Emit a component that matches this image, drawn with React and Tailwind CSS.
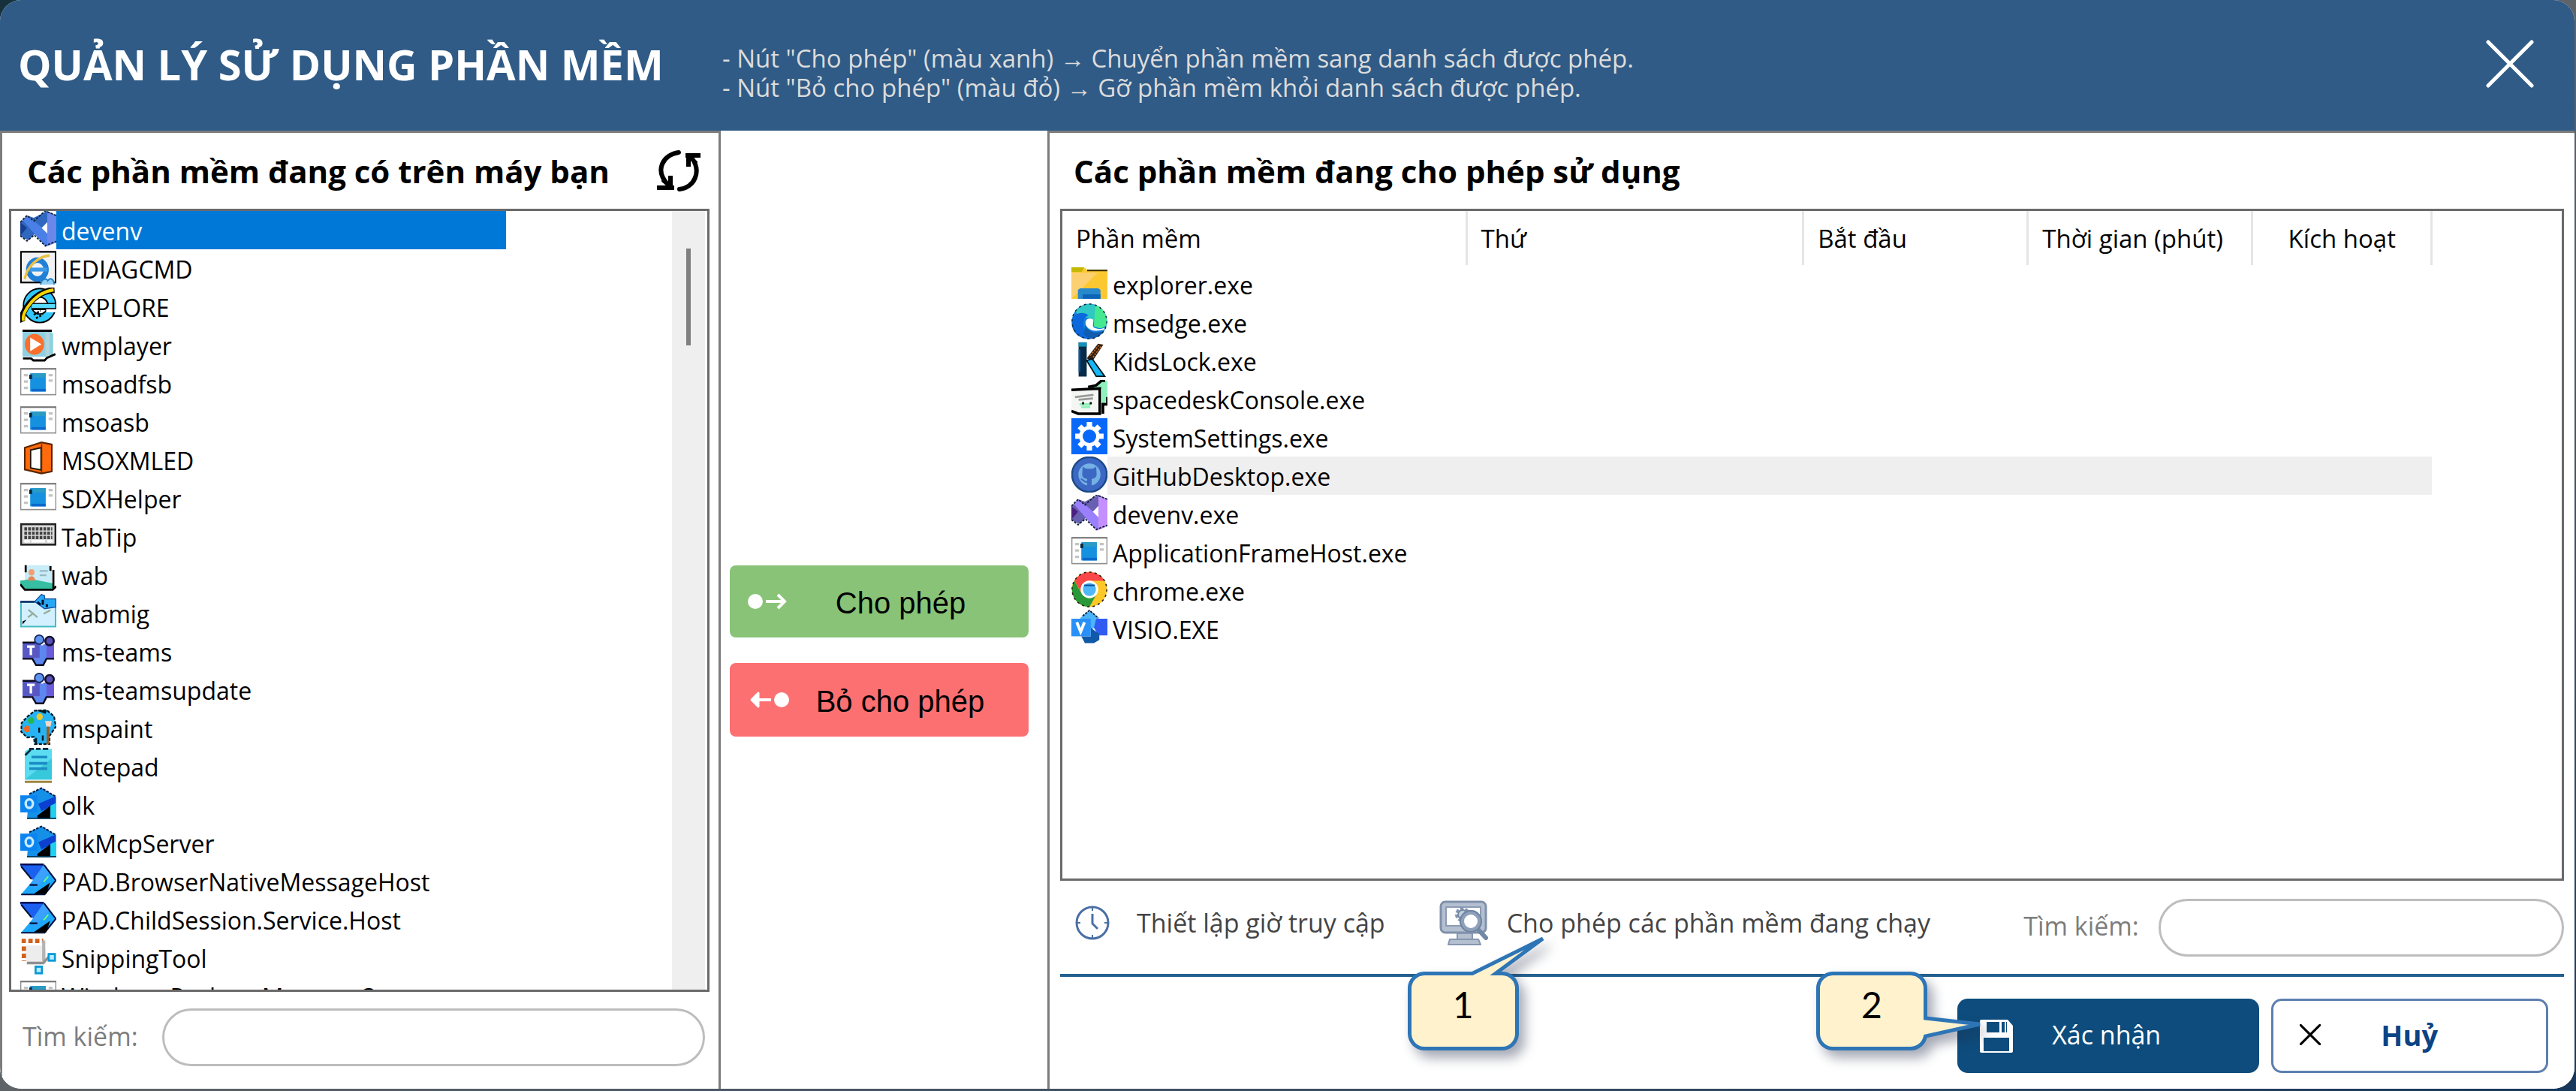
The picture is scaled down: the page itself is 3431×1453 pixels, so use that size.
import React, { useState } from "react";

/* ---------- 16-unit application icons ---------- */

function Glyph({ children, fit }) {
  return (
    <svg viewBox="0 0 16 16" className="h-12 w-12 shrink-0" aria-hidden="true">
      <g transform={fit}>{children}</g>
    </svg>
  );
}

function VisualStudioIcon({ left, dark, band, right }) {
  return (
    <Glyph>
      <path d="M0 5 3 2 6 3 12 0 16 2V13L12 15.5 6 10 3.5 13 0 11Z" fill={dark} />
      <path d="M0 5 3 7.5 0 11Z" fill={left} />
      <path d="M11 0 16 2V14L11 16Z" fill={right} />
      <path d="M3 7.5 12 0V5L4 12.5 1 12Z" fill={dark} />
      <path d="M1 4 3.5 2.2 12 9.5V15.5L10.5 15Z" fill={band} />
      <path d="M12 5 9.5 7.5 12 10Z" fill="#fff" />
      <path
        d="M0 5 3 2 6 4.5 11 0 16 2M0 11 3 13.3 6.2 10.7 11 15.4 16 13.5"
        fill="none"
        stroke="#102038"
        strokeWidth=".6"
        strokeDasharray="1 .6"
      />
    </Glyph>
  );
}

const VsBlueIcon = () => <VisualStudioIcon left="#173f8f" dark="#3068c0" band="#4a7fe8" right="#6a88ea" />;
const VsPurpleIcon = () => <VisualStudioIcon left="#4a2080" dark="#6860b0" band="#9a80ff" right="#c490ff" />;

function IeDiagIcon() {
  return (
    <Glyph fit="translate(0 .8) scale(1 1.08)">
      <rect x=".3" y=".3" width="15.4" height="12.6" fill="#f2f2f4" stroke="#000" strokeWidth=".7" />
      <circle cx="7.6" cy="7.6" r="3.9" fill="none" stroke="#2080d8" strokeWidth="2.3" />
      <path d="M4 7.6h8" stroke="#3c9ae8" strokeWidth="1.6" />
      <path d="M2 11.5C3 6 8 2.2 13 1.8" fill="none" stroke="#ecc040" strokeWidth="1.1" />
      <path d="M9 13.8c.5-2.4 2.6-3 3.2-1.6 1.2-1.6 2.8-.6 2.8 1.6" fill="#8fd0f4" stroke="#2080c0" strokeWidth=".6" />
    </Glyph>
  );
}

function IeIcon() {
  return (
    <Glyph fit="scale(1 1.05)">
      <circle cx="8.6" cy="7.6" r="5.4" fill="none" stroke="#000" strokeWidth="4.2" />
      <circle cx="8.6" cy="7.6" r="5.4" fill="none" stroke="#30c8fa" strokeWidth="3" />
      <path d="M5 8h10.5" stroke="#000" strokeWidth="3" />
      <path d="M5 7.8h10.5" stroke="#58dcff" strokeWidth="1.7" />
      <path d="M11.5 9.8h4.5" stroke="#fff" strokeWidth="1.3" />
      <path d="M1 14.5C-.5 11 6 1.5 15.2 1" fill="none" stroke="#000" strokeWidth="2.6" />
      <path d="M1.4 14C.2 10.6 6.5 2 14.8 1" fill="none" stroke="#f4d400" strokeWidth="1.3" />
      <path d="M6 11.5 9 9.8M7 13l3-1.6" stroke="#000" strokeWidth=".8" strokeDasharray="1 .6" />
    </Glyph>
  );
}

function MediaPlayerIcon() {
  return (
    <Glyph fit="translate(0 .2) scale(1 1.08)">
      <path d="M1 2h12l1.6 1v9.5H1Z" fill="#8ed0e0" />
      <path d="M1 1.8h13M1.2 13.2h3.6l1 .8h5l1-1 3.8-1.6" fill="none" stroke="#000" strokeWidth=".9" />
      <path d="M11.2 2.6h1.8v9.6h-1.8z" fill="#b2d4dc" />
      <circle cx="6.3" cy="7.4" r="4.3" fill="#fb6f2c" />
      <path d="M4.4 4.6 9.4 7.4 4.4 10.2Z" fill="#fff" />
    </Glyph>
  );
}

function GenericAppIcon() {
  return (
    <Glyph fit="translate(0 .8) scale(1 1.08)">
      <rect x=".2" y="1.2" width="15.6" height="10.6" fill="#fff" stroke="#8d8d8d" strokeWidth=".5" />
      <path d="M0 1.2h16" stroke="#777" strokeWidth=".6" />
      <path d="M1.6 3.8h1.8M1.6 6.4h1.8M1.6 9h1.8M12.6 3.8h1.8M12.6 6h1.8" stroke="#c4c4c4" strokeWidth="1" />
      <rect x="4.4" y="3" width="6.9" height="7.5" fill="#1691e0" />
      <path d="M5.5 3h5.8v1.8H5.5z" fill="#2a9bc4" />
      <path d="M5 9.4h6.3v1.1H5z" fill="#0c68cc" />
      <rect x="4" y="3.6" width="1.2" height="1.8" fill="#0a2438" />
    </Glyph>
  );
}

function OfficeIcon() {
  return (
    <Glyph fit="translate(0 .4) scale(1 1.03)">
      <path d="M2 2.6 9.4.3 14 1.2v11.6L9.4 13.7 2 12Z" fill="#ff6a0c" stroke="#5a2600" strokeWidth=".7" />
      <path d="M4.6 3.6 9.2 2.6v9.6l-4.6-.9Z" fill="#fff" stroke="#1c1400" strokeWidth=".6" />
      <path d="M9.5 1v12.4" stroke="#5c3000" strokeWidth=".5" />
    </Glyph>
  );
}

function KeyboardIcon() {
  return (
    <Glyph fit="translate(0 -.2) scale(1 1.08)">
      <rect x=".4" y="3" width="15.2" height="8.4" fill="#d8d8d8" stroke="#222" strokeWidth=".8" />
      <path
        d="M1.8 4.9h12.4M1.8 6.7h12.4M1.8 8.5h12.4"
        stroke="#444"
        strokeWidth="1.3"
        strokeDasharray="1.2 .5"
      />
      <path d="M1.8 10h2.4M5 10h6M12 10h2.4" stroke="#fff" strokeWidth="1" />
    </Glyph>
  );
}

function ContactsIcon() {
  return (
    <Glyph fit="translate(0 1) scale(1 1.07)">
      <path d="M2 3h12v8.6H2Z" fill="#c8ecf8" />
      <path d="M0 9.4 5 8.8 14.6 10.6V13H2L0 11.4Z" fill="#35bfa0" />
      <circle cx="5" cy="6" r="1.3" fill="#f0a070" />
      <path d="M3.4 9.4c0-2.4 3.2-2.4 3.2 0Z" fill="#e08858" />
      <path d="M8.6 5.4h3.6M8.6 7.2h3" stroke="#98b8c4" strokeWidth=".7" />
      <path d="M2.4 3v3M13.4 3.4v2M14.7 5v7.6M0 11l2 2.2h12.4l1.6-1.4" fill="none" stroke="#000" strokeWidth=".9" />
    </Glyph>
  );
}

function ContactsMigrateIcon() {
  return (
    <Glyph>
      <path d="M.3 3.6h15.4v10.9H.3Z" fill="#d2f0ff" stroke="#44bcc4" strokeWidth=".7" />
      <path d="M0 3.5h6.4" stroke="#04205c" strokeWidth=".8" />
      <path d="M6.4 3.4 9.4.2l1.4.6v1.4h5v3.6L10.8 6.6Z" fill="#28a8f4" stroke="#0c4c9c" strokeWidth=".4" />
      <path d="M7.6 3.6 9 4.8M10 2.6v2.2M11.8 4.6v1.2" stroke="#001030" strokeWidth="1" />
      <path d="M3.6 7l4 3.4M3.4 10.4l2.6-2M10.4 8.8l3-1.6" stroke="#98b0a0" strokeWidth=".8" />
      <path d="M1 13.6v-1.4l1.8-.8Z" fill="#000" />
    </Glyph>
  );
}

function TeamsIcon() {
  return (
    <Glyph fit="translate(0 1)">
      <path d="M1 3.6h8.2v7H1Z" fill="#5858c4" />
      <path d="M10.2 4.4H15v6.4h-4.8Z" fill="#6a5cd8" />
      <circle cx="13" cy="2.9" r="1.9" fill="#5850b8" stroke="#14102e" strokeWidth=".9" />
      <circle cx="8.4" cy="2.3" r="2" fill="#5c94f0" stroke="#14245c" strokeWidth=".6" />
      <path d="M6.6 4.8h5v7L9.8 14H7.4L5.6 12v-1.4h3V4.8Z" fill="#5c86f0" />
      <path d="M1 3.6h5.6M1 10.8h4.4L7 13.6h3.2l1.4-2.8H15" fill="none" stroke="#0a0a20" strokeWidth=".8" />
      <path d="M3 5.4h3.4M4.7 5.4v3.8" stroke="#fff" strokeWidth="1.1" />
    </Glyph>
  );
}

function PaintIcon() {
  return (
    <Glyph fit="scale(1 1.04)">
      <path
        d="M3 3.5 6.4.8l5.4-.2L15 3.2l.8 4.4L13 11.6V15H6.400l-.4-3-3 .2L.4 9.8.6 6Z"
        fill="#26b4f4"
        stroke="#021828"
        strokeWidth=".7"
        strokeDasharray="1.4 .6"
      />
      <path d="M7 .6h4.8l-.6 1.6Z" fill="#021820" />
      <circle cx="4.8" cy="5" r="1.4" fill="#24b84c" />
      <circle cx="8.6" cy="3.4" r="1.4" fill="#f0c828" />
      <circle cx="3" cy="8.6" r="1.4" fill="#f06828" />
      <path d="M11 5.2h3l-.6 2.4h-1.8Z" fill="#f8d8c4" />
      <path d="M12.3 7.6v7.6" stroke="#9c5c20" strokeWidth="1.2" />
      <path d="M8.4 8v2.2M10 11.4v2.2M7 12.4v2.4" stroke="#021828" strokeWidth=".8" />
    </Glyph>
  );
}

function NotepadIcon() {
  return (
    <Glyph>
      <path d="M2 2 3.6.8H14V14.4H2Z" fill="#5cdcf0" />
      <path d="M2 14.4 14 5v9.4Z" fill="#38c8dc" />
      <path d="M2.2 3.6 4.6 1.2M4 .8h2M7 .8h2M10 .8h2.4" stroke="#00283c" strokeWidth=".9" />
      <path d="M5 4.4h7M4 7.2h8M4 9.6h8" stroke="#1c8cc4" strokeWidth="1.2" />
      <path d="M2 15.4h12" stroke="#a08440" strokeWidth="1" />
    </Glyph>
  );
}

function OutlookIcon() {
  return (
    <Glyph fit="translate(0 .8)">
      <path d="M4 3 9.4.4l6.4 3.8V14H3Z" fill="#1490e8" />
      <path d="M4 3 9.4.4l6.4 3.8" fill="none" stroke="#002050" strokeWidth=".7" strokeDasharray="1.2 .5" />
      <path d="M8 7.4 15.8 4v3L9.4 10.6Z" fill="#0c40d0" />
      <path d="M7.6 12.6 13.4 8.2V14H7.6Z" fill="#000" />
      <path d="M13.4 8.2 16 7v7h-2.6Z" fill="#20d0f0" />
      <path d="M3 13.8h13" stroke="#003c58" strokeWidth=".6" />
      <path d="M0 3.6h7.6v7.6H0Z" fill="#0c84f0" />
      <ellipse cx="4" cy="7.3" rx="1.6" ry="1.9" fill="none" stroke="#c8ecff" strokeWidth="1.1" />
    </Glyph>
  );
}

function PowerAutomateIcon() {
  return (
    <Glyph fit="translate(0 .8)">
      <path d="M0 .3h10.6L6 7.6 0 .9Z" fill="#1c60f0" />
      <path d="M10.6.3 16 7.4 10.6 13.8H.2L5.4 7.6Z" fill="#1ca8fc" />
      <path d="M10.6.3 13 3.4 6.4 11.6 5.4 7.6Z" fill="#3ca0ff" />
      <path d="M0 .3h10.4" stroke="#00084c" strokeWidth=".8" />
      <path d="M10.6.6 15.8 7.4 10.8 13.6H.4M.4 1.2 5 6.8M4.2 9.4h3.4" fill="none" stroke="#001038" strokeWidth=".7" />
      <path d="M6 13.4 13.2 8.4 11.6 13.4Z" fill="#000" />
      <path d="m10.4 8 2-2.4" stroke="#78f088" strokeWidth=".7" />
    </Glyph>
  );
}

function SnippingIcon() {
  return (
    <Glyph fit="scale(1 1.04)">
      <path d="M2.4 3h8l1 1.4V11H2.4Z" fill="#ededed" />
      <path d="M.6 1h9.6" stroke="#d0601c" strokeWidth="1.9" strokeDasharray="1.9 1.1" />
      <path d="M1.6 3.4v6.2" stroke="#d0601c" strokeWidth="1.9" strokeDasharray="1.9 1.1" />
      <path d="M10.4.8v8.8" stroke="#b4b4b4" strokeWidth="1.4" />
      <path d="M3 10.4h7.2l2.4-2.6" fill="none" stroke="#909090" strokeWidth="1.1" />
      <rect x="12.6" y="6.6" width="2.8" height="2.8" fill="#b8ecff" stroke="#0898d8" strokeWidth=".9" />
      <rect x="6.8" y="12" width="2.8" height="2.8" fill="#b8ecff" stroke="#0898d8" strokeWidth=".9" />
    </Glyph>
  );
}

function ExplorerIcon() {
  return (
    <Glyph>
      <path d="M0 1h5.6L7 2.2h9V15H0Z" fill="#fcc832" />
      <path d="M0 1h5.6L4.6 3H0Z" fill="#c4b800" />
      <path d="M7 2.4h9" stroke="#3c3000" strokeWidth=".7" />
      <path d="M0 15V3.4h11.6Z" fill="#fcd070" />
      <path d="M2.9 15v-4l1-.7h8l1 .7v4Z" fill="#2888cc" />
      <path d="M5 13h7.9v2H5Z" fill="#0c64b8" />
    </Glyph>
  );
}

function EdgeIcon() {
  return (
    <Glyph>
      <circle cx="8" cy="8" r="7.8" fill="#1480dc" />
      <path d="M2 3.2A7.8 7.8 0 0 1 15.8 8c0 2-1.4 3-3.2 3l-2.8-.6c1-2.4-.6-4-2.6-4C5 6.4 2 5.5 2 3.2Z" fill="#30c8c4" />
      <path d="M10.6.7A7.8 7.8 0 0 1 15.8 8c0 2.2-1.6 3-3.4 3L10 10Z" fill="#44e890" />
      <path d="M.2 8C.8 4 5.4 3.4 7.6 5.4 4 6.4 4.4 12.8 9.6 15.6 4 16.6-.2 13 .2 8Z" fill="#0c68dc" />
      <path d="M6.4 9.2C6.6 12.6 10.4 13.8 14.6 12.2 12 16.2 7.4 16.2 5.4 13.6Z" fill="#105cb0" />
      <path d="M9.6 7.2C7 5.8 5.6 8 6.6 10c1.4 2.4 5 2.6 8 1.6l.2-.8c-2 .8-4 .6-5-.2-.6-.8.2-2-.2-3.4Z" fill="#fff" />
      <circle cx="8" cy="8" r="7.7" fill="none" stroke="#082c44" strokeWidth=".5" strokeDasharray="1 1.4" />
    </Glyph>
  );
}

function KidsLockIcon() {
  return (
    <Glyph>
      <path d="M3.2.3h3.6v15.2H3.2Z" fill="#062c48" />
      <path d="M3.2.3h3.6v1.9H3.2Z" fill="#1490b8" />
      <path d="M3.6 3.4v10" stroke="#0c58a0" strokeWidth=".8" />
      <path d="M6.8 7.4 11.8.9l2.4.4L9.4 8.6Z" fill="#342010" />
      <path d="m8.4 6.2 3.8-4.6M9.6 7l3.6-5" stroke="#c07030" strokeWidth=".5" strokeDasharray=".8 .5" />
      <path d="m6.8 8.4 2.4-.8 5.6 7.8H11Z" fill="#14b8f4" stroke="#04141c" strokeWidth=".6" />
    </Glyph>
  );
}

function SpacedeskIcon() {
  return (
    <Glyph>
      <path d="M7 3.6 11 1.8 13.4.3H16v8L13.6 12V4Z" fill="#90f0bc" />
      <path d="M7.4 3.2 11 2.4 13.4.3H15M16 7.6v3.2h-2V15" fill="none" stroke="#000" strokeWidth="1.2" />
      <path d="M0 4.2 12.6 3.8V15L0 13.6Z" fill="#f4f6f4" />
      <path d="M0 4.4 12.6 3.8V15H3L0 13.8" fill="none" stroke="#000" strokeWidth="1.2" />
      <path d="M1.6 7.6 9.8 6.6M3.2 8.8l6.4-.6" stroke="#9a9a9a" strokeWidth=".9" />
      <path d="M3.6 10.8h5M4.4 12h4" stroke="#90f0b8" strokeWidth="1" />
      <path d="M5.2 9.8v1M8.6 9.8v1" stroke="#000" strokeWidth=".9" />
    </Glyph>
  );
}

function SettingsIcon() {
  return (
    <Glyph>
      <rect width="16" height="16" fill="#0868fa" />
      <g stroke="#fff" strokeWidth="2.4">
        <path d="M8 1.7v12.6M1.7 8h12.6M3.6 3.6l8.8 8.8M12.4 3.6l-8.8 8.8" />
      </g>
      <circle cx="8" cy="8" r="4.6" fill="#fff" />
      <circle cx="8" cy="8" r="3" fill="#0868fa" />
    </Glyph>
  );
}

function GithubIcon() {
  return (
    <Glyph>
      <circle cx="8" cy="8" r="7.7" fill="#3c68c4" stroke="#1c4888" strokeWidth=".8" />
      <circle cx="8" cy="8" r="4.9" fill="#74b0e4" />
      <path d="M5 4.6 6.6 5.4h2.8L11 4.6l.2 3.2c0 1.6-1.2 2-2.2 2.1V13H7V9.9C6 9.8 4.8 9.4 4.8 7.8Z" fill="#3c68c4" />
      <path d="M4.2 10c1 0 1 1.4 2.8 1.3" fill="none" stroke="#3c68c4" strokeWidth=".7" />
    </Glyph>
  );
}

function ChromeIcon() {
  return (
    <Glyph>
      <circle cx="8" cy="8" r="7.8" fill="#fcc828" />
      <path d="M1.3 4.2A7.8 7.8 0 0 1 14.8 4.2H8L4.8 9.8Z" fill="#fa4848" />
      <path d="M1.3 4.2 4.6 9.9 8 11.8 11.2 10 8 15.8A7.8 7.8 0 0 1 1.3 4.2Z" fill="#289838" />
      <circle cx="8" cy="8" r="3.9" fill="#fff" />
      <circle cx="8" cy="8" r="2.9" fill="#50b8f8" />
      <path d="M5.6 6.2h4.8" stroke="#0c509c" strokeWidth=".7" />
      <circle cx="8" cy="8" r="7.7" fill="none" stroke="#201810" strokeWidth=".5" strokeDasharray="1 1.4" />
    </Glyph>
  );
}

function VisioIcon() {
  return (
    <Glyph>
      <path d="M4 3.6 8 .2l4 3.4v3.6L8 9.2 4 7Z" fill="#4cb4f8" />
      <path d="m5 2.8 3-2.5 4 3.4" fill="none" stroke="#041c38" strokeWidth=".6" strokeDasharray="1 .5" />
      <path d="M11 4h5v7.4h-4L10 8Z" fill="#305cf4" />
      <path d="M4.4 11.8H8.6V8l3.8 2.8v2.6L10 14.8H6Z" fill="#1058a8" />
      <path d="M0 4h8.6v7.8H0Z" fill="#2890f8" />
      <path d="m2.4 5.6 1.7 4.2 1.7-4.2" fill="none" stroke="#fff" strokeWidth="1.3" />
    </Glyph>
  );
}

/* ---------- toolbar icons ---------- */

function RefreshIcon() {
  return (
    <svg viewBox="0 0 58 58" className="h-[58px] w-[58px]" fill="none" stroke="#000" strokeWidth="6" strokeLinecap="round" aria-hidden="true">
      <path d="M29 4C8 7 -4 28 15 47" />
      <path d="M3 51H20M18 49V38" strokeLinecap="square" strokeLinejoin="miter" />
      <path d="M30 53C50 51 60 29 46 11" />
      <path d="M56 8H41M42 9V20" strokeLinecap="square" />
      <path d="M8 42 19 51M52 17 42 8" strokeWidth="4" />
    </svg>
  );
}

function CloseIcon({ className, width }) {
  return (
    <svg viewBox="0 0 64 64" className={className} fill="none" stroke="currentColor" strokeWidth={width} strokeLinecap="round" aria-hidden="true">
      <path d="M3 3 61 61M61 3 3 61" />
    </svg>
  );
}

function ClockIcon() {
  return (
    <svg viewBox="0 0 46 46" className="h-[46px] w-[46px]" fill="none" stroke="#4a6fa5" strokeWidth="3" aria-hidden="true">
      <circle cx="23" cy="23" r="21" />
      <path d="M23 11v13l7 7" />
      <path d="M23 2v5M23 39v5M2 23h5M39 23h5" strokeWidth="2" />
    </svg>
  );
}

function MonitorSearchIcon() {
  return (
    <svg viewBox="0 0 66 62" className="h-[62px] w-[66px]" fill="none" aria-hidden="true">
      <rect x="2" y="3" width="60" height="41" rx="6" fill="#b4c0d0" stroke="#7f90aa" strokeWidth="3" />
      <path d="M9 10h46v25H9Z" fill="#fff" stroke="#8c9cb4" strokeWidth="2" />
      <path d="M24 45h20v8H24Z" fill="#b4c0d0" stroke="#8797b0" strokeWidth="2" />
      <path d="M14 53h38l3 7H12Z" fill="#b4c0d0" stroke="#8797b0" strokeWidth="2" strokeLinejoin="round" />
      <circle cx="31" cy="20" r="7" stroke="#8496b0" strokeWidth="6" strokeDasharray="4 2" />
      <circle cx="31" cy="20" r="6" fill="#c4cedc" stroke="#7388a6" strokeWidth="2" />
      <path d="m50 38 12 13" stroke="#7388a6" strokeWidth="6" strokeLinecap="round" />
      <circle cx="42" cy="29" r="12" fill="#fff" stroke="#8fa0ba" strokeWidth="6" />
      <circle cx="42" cy="29" r="14" stroke="#6f84a2" strokeWidth="2" />
    </svg>
  );
}

function SaveIcon() {
  return (
    <svg viewBox="0 0 46 46" className="h-[46px] w-[46px]" aria-hidden="true">
      <path d="M3 1H38l7 8V43a2 2 0 0 1-2 2H3a2 2 0 0 1-2-2V3a2 2 0 0 1 2-2Z" fill="#fff" />
      <path d="M10 4H37V18H10Z" fill="#0d4c7c" />
      <path d="M27 4h3v14h-3zM34 4h2v14h-2z" fill="#fff" />
      <path d="M6 25H40V43H6Z" fill="#0d4c7c" />
    </svg>
  );
}

function MoveRightIcon() {
  return (
    <svg viewBox="0 0 54 24" className="h-6 w-[54px]" fill="none" stroke="#fff" strokeWidth="4" aria-hidden="true">
      <circle cx="11" cy="12" r="10" fill="#fff" stroke="none" />
      <path d="M25 12H49M41 3l9 9-9 9" />
    </svg>
  );
}

function MoveLeftIcon() {
  return (
    <svg viewBox="0 0 54 24" className="h-6 w-[54px]" fill="none" stroke="#fff" strokeWidth="4" aria-hidden="true">
      <circle cx="43" cy="12" r="10" fill="#fff" stroke="none" />
      <path d="M29 12H6" />
      <path d="M12 3 3 12l9 9Z" fill="#fff" strokeWidth="3" strokeLinejoin="round" />
    </svg>
  );
}

/* ---------- data ---------- */

const installed = [
  ["devenv", VsBlueIcon],
  ["IEDIAGCMD", IeDiagIcon],
  ["IEXPLORE", IeIcon],
  ["wmplayer", MediaPlayerIcon],
  ["msoadfsb", GenericAppIcon],
  ["msoasb", GenericAppIcon],
  ["MSOXMLED", OfficeIcon],
  ["SDXHelper", GenericAppIcon],
  ["TabTip", KeyboardIcon],
  ["wab", ContactsIcon],
  ["wabmig", ContactsMigrateIcon],
  ["ms-teams", TeamsIcon],
  ["ms-teamsupdate", TeamsIcon],
  ["mspaint", PaintIcon],
  ["Notepad", NotepadIcon],
  ["olk", OutlookIcon],
  ["olkMcpServer", OutlookIcon],
  ["PAD.BrowserNativeMessageHost", PowerAutomateIcon],
  ["PAD.ChildSession.Service.Host", PowerAutomateIcon],
  ["SnippingTool", SnippingIcon],
  ["Windows.PackageManagerServer", GenericAppIcon],
];

const allowed = [
  ["explorer.exe", ExplorerIcon],
  ["msedge.exe", EdgeIcon],
  ["KidsLock.exe", KidsLockIcon],
  ["spacedeskConsole.exe", SpacedeskIcon],
  ["SystemSettings.exe", SettingsIcon],
  ["GitHubDesktop.exe", GithubIcon],
  ["devenv.exe", VsPurpleIcon],
  ["ApplicationFrameHost.exe", GenericAppIcon],
  ["chrome.exe", ChromeIcon],
  ["VISIO.EXE", VisioIcon],
];

/* ---------- pieces ---------- */

function Callout({ number, path, className }) {
  return (
    <div className={"pointer-events-none absolute " + className}>
      <svg viewBox="0 0 148 105" className="h-[105px] w-[148px] overflow-visible drop-shadow-[8px_10px_8px_rgba(30,40,70,0.4)]" aria-hidden="true">
        <path d={path} fill="#fff2cc" stroke="#2e75b6" strokeWidth="5" strokeLinejoin="miter" />
      </svg>
      <span className="absolute inset-x-0 top-4 text-center font-['Lato',sans-serif] text-[48px] leading-[56px] text-black">{number}</span>
    </div>
  );
}

function SearchField({ id }) {
  return (
    <>
      <label htmlFor={id} className="shrink-0 pb-1 text-[34px] leading-[46px] text-[#7d7d7d]">
        Tìm kiếm:
      </label>
      <input
        id={id}
        type="text"
        className="h-[77px] min-w-0 flex-1 rounded-full border-[3px] border-[#bdbdbd] bg-white px-8 text-[34px] text-black outline-none"
      />
    </>
  );
}

function InstalledPanel() {
  const [selected, setSelected] = useState("devenv");
  return (
    <section className="flex min-h-0 min-w-0 flex-col border-x-[3px] border-t-[3px] border-[#7c7c7c] bg-white pr-3 pl-[9px]">
      <div className="flex h-[101px] shrink-0 items-center justify-between pr-3 pl-6">
        <h2 className="text-[42px] leading-[56px] font-bold">Các phần mềm đang có trên máy bạn</h2>
        <button type="button" aria-label="Làm mới" className="shrink-0">
          <RefreshIcon />
        </button>
      </div>
      <div className="flex min-h-0 flex-1 border-[3px] border-[#6a6a6a]">
        <ul role="listbox" aria-label="Các phần mềm đang có trên máy bạn" className="min-w-0 flex-1 overflow-hidden pl-3">
          {installed.map(([name, Icon]) => (
            <li key={name} role="option" aria-selected={name === selected} onClick={() => setSelected(name)} className="flex h-[51px] items-start">
              <Icon />
              <span
                className={
                  "h-[51px] w-[69%] pl-[7px] text-[32px] leading-[54px] whitespace-nowrap " +
                  (name === selected ? "bg-[#0078d7] text-white" : "text-black")
                }
              >
                {name}
              </span>
            </li>
          ))}
        </ul>
        <div className="mr-[3px] w-11 shrink-0 bg-[#efefef] pt-[50px]">
          <div className="mx-auto h-[129px] w-[6px] bg-[#7f7f7f]" />
        </div>
      </div>
      <div className="flex h-[129px] shrink-0 items-center gap-8 pr-[6px] pb-2 pl-[18px]">
        <SearchField id="search-installed" />
      </div>
    </section>
  );
}

function TransferButtons() {
  return (
    <div className="flex flex-col gap-[34px] bg-white pt-[579px] pr-[25px] pl-3 font-['Liberation_Sans',sans-serif] text-[40px] leading-[48px] text-black">
      <button type="button" className="flex h-[96px] items-center rounded-lg bg-[#89c377] pl-[23px]">
        <MoveRightIcon />
        <span className="flex-1 pt-1 pr-5 text-center">Cho phép</span>
      </button>
      <button type="button" className="flex h-[98px] items-center rounded-lg bg-[#fc7072] pl-[26px]">
        <MoveLeftIcon />
        <span className="flex-1 pt-1 pr-6 text-center">Bỏ cho phép</span>
      </button>
    </div>
  );
}

function AllowedTable() {
  const head = "h-[72px] border-r-[3px] border-[#e5e5e5] text-[33px] font-normal";
  return (
    <div className="min-h-0 flex-1 overflow-hidden border-[3px] border-[#6a6a6a]">
      <table className="w-[91.4%] table-fixed border-collapse leading-[51px] text-black">
        <colgroup>
          <col className="w-[29.5%]" />
          <col className="w-[24.6%]" />
          <col className="w-[16.4%]" />
          <col className="w-[16.4%]" />
          <col className="w-[13.1%]" />
        </colgroup>
        <thead>
          <tr>
            <th className={head + " pl-[18px] text-left"}>Phần mềm</th>
            <th className={head + " pl-[18px] text-left"}>Thứ</th>
            <th className={head + " pl-[18px] text-left"}>Bắt đầu</th>
            <th className={head + " pl-[18px] text-left whitespace-nowrap"}>Thời gian (phút)</th>
            <th className={head + " text-center whitespace-nowrap"}>Kích hoạt</th>
          </tr>
        </thead>
        <tbody>
          {allowed.map(([name, Icon]) => {
            const hover = name === "GitHubDesktop.exe" ? " bg-[#efefef]" : "";
            return (
              <tr key={name} className="h-[51px]">
                <td className="p-0">
                  <div className="flex h-[51px] pl-3">
                    <Icon />
                    <span className={"min-w-0 flex-1 pl-[7px] text-[32px] leading-[54px]" + hover}>{name}</span>
                  </div>
                </td>
                <td className={"p-0" + hover} />
                <td className={"p-0" + hover} />
                <td className={"p-0" + hover} />
                <td className={"p-0" + hover} />
              </tr>
            );
          })}
        </tbody>
      </table>
    </div>
  );
}

function AllowedPanel() {
  return (
    <section className="flex min-h-0 min-w-0 flex-col border-t-[3px] border-l-[3px] border-[#7c7c7c] bg-white pr-[14px] pl-[14px]">
      <div className="flex h-[101px] shrink-0 items-center pl-[18px]">
        <h2 className="text-[42px] leading-[56px] font-bold">Các phần mềm đang cho phép sử dụng</h2>
      </div>
      <AllowedTable />
      <div className="flex h-[124px] shrink-0 items-center pl-5 text-[34px] leading-[46px] text-[#444]">
        <button type="button" className="mb-3 flex shrink-0 items-center gap-9">
          <ClockIcon />
          Thiết lập giờ truy cập
        </button>
        <div className="relative z-10 mb-3 ml-[72px] shrink-0">
          <button type="button" className="flex items-center gap-6">
            <MonitorSearchIcon />
            Cho phép các phần mềm đang chạy
          </button>
          <Callout
            number="1"
            className="top-[96px] left-[-42px]"
            path="M22 2.5H86L180 -44 117 2.5H126A20 20 0 0 1 145.5 22V83A20 20 0 0 1 126 102.5H22A20 20 0 0 1 2.5 83V22A20 20 0 0 1 22 2.5Z"
          />
        </div>
        <div className="ml-auto flex w-[36.3%] items-center gap-[26px]">
          <SearchField id="search-allowed" />
        </div>
      </div>
      <div className="h-1 shrink-0 bg-[#24618f]" />
      <div className="flex h-[149px] shrink-0 items-start justify-end gap-4 pt-[29px] pr-[21px]">
        <div className="relative w-[20.3%]">
          <button type="button" className="flex h-[99px] w-full items-center rounded-[14px] bg-[#0d4c7c] pl-[29px] text-[34px] leading-[46px] text-white">
            <SaveIcon />
            <span className="flex-1 pr-20 pb-1 text-center">Xác nhận</span>
          </button>
          <Callout
            number="2"
            className="top-[-36px] left-[-188px]"
            path="M22 2.5H126A20 20 0 0 1 145.5 22V62L218 70 145.5 86A20 20 0 0 1 126 102.5H22A20 20 0 0 1 2.5 83V22A20 20 0 0 1 22 2.5Z"
          />
        </div>
        <button type="button" className="flex h-[99px] w-[18.6%] items-center rounded-[14px] border-[3px] border-[#5d7fb0] bg-white pl-[35px] text-[38px] leading-[50px] font-bold text-[#0b4484]">
          <CloseIcon className="mb-1 h-7 w-7 text-black" width={7} />
          <span className="flex-1 pr-16 pb-1 text-center">Huỷ</span>
        </button>
      </div>
    </section>
  );
}

export default function App() {
  return (
    <div className="flex h-screen min-h-[1453px] flex-col bg-gradient-to-br from-[#16303c] via-[#5f6468] to-[#17375c] pr-[2px] pb-[3px] font-['Open_Sans','Noto_Sans',sans-serif] text-black">
      <main className="flex min-h-0 flex-1 flex-col overflow-hidden rounded-[28px] bg-white">
        <header className="flex h-[174px] shrink-0 items-center bg-[#305b86] pr-[54px] pb-1 pl-6 text-white">
          <h1 className="w-[938px] shrink-0 text-[56px] leading-[76px] font-bold whitespace-nowrap">QUẢN LÝ SỬ DỤNG PHẦN MỀM</h1>
          <div className="pt-6 text-[33px] leading-[39px] text-[#dcdcdc]">
            <p>- Nút "Cho phép" (màu xanh) → Chuyển phần mềm sang danh sách được phép.</p>
            <p>- Nút "Bỏ cho phép" (màu đỏ) → Gỡ phần mềm khỏi danh sách được phép.</p>
          </div>
          <button type="button" aria-label="Đóng" className="ml-auto">
            <CloseIcon className="h-16 w-16 text-white" width={5} />
          </button>
        </header>
        <div className="grid min-h-0 flex-1 grid-cols-[minmax(0,960fr)_minmax(0,435fr)_minmax(0,2034fr)]">
          <InstalledPanel />
          <TransferButtons />
          <AllowedPanel />
        </div>
      </main>
    </div>
  );
}
